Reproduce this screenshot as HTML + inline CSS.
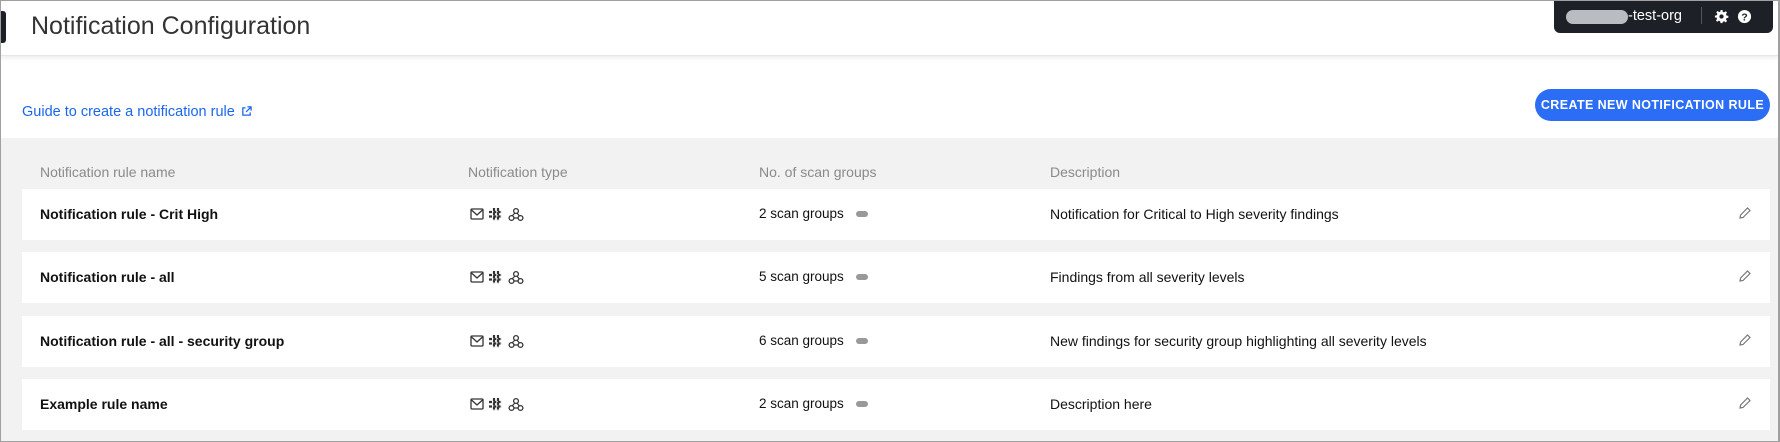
<!DOCTYPE html>
<html><head><style>
*{margin:0;padding:0;box-sizing:border-box}
body{width:1780px;height:442px;overflow:hidden;background:#fff;font-family:"Liberation Sans",sans-serif;position:relative}
.frame{position:absolute;inset:0;border:1px solid #a0a0a0;border-right:2px solid #a0a0a0}
.hdr{position:absolute;left:1px;top:1px;right:2px;height:55px;background:#fff;box-shadow:0 2px 4px rgba(0,0,0,.08);border-bottom:1px solid #e6e6e6}
.title{position:absolute;left:30px;top:11px;font-size:25px;color:#333}
.tab{position:absolute;left:0;top:10px;width:5px;height:32px;background:#1d2026;border-radius:0 3px 3px 0}
.top{position:absolute;left:1554px;top:0;width:219px;height:33px;background:#1d2026;border-radius:0 0 6px 6px}
.blur{position:absolute;left:12px;top:10px;width:62px;height:14px;border-radius:7px;background:#b9bcc0}
.org{position:absolute;left:74px;top:8px;color:#fff;font-size:14.5px}
.sep{position:absolute;left:147px;top:7px;width:1px;height:17px;background:#555}
.sg{position:absolute;width:15px;height:15px;top:9px}
.link{position:absolute;left:22px;top:104px;color:#1a66f0;font-size:14.5px}
.btn{position:absolute;left:1535px;top:89px;width:235px;height:32px;border-radius:16px;background:#2b6ef5;color:#fff;font-weight:bold;font-size:12.5px;text-align:center;line-height:32px;letter-spacing:.4px}
.gray{position:absolute;left:1px;top:138px;right:2px;bottom:0;background:#f2f2f2}
.ch{position:absolute;top:164px;color:#8a8a8a;font-size:14px}
.row{position:absolute;left:22px;width:1748px;height:51px;background:#fff}
.row span{position:absolute;top:17px;font-size:14px;color:#111}
.nm{left:18px;font-weight:bold}
.ic{position:absolute;left:448px;top:18px}
.row span.sc{left:737px;font-size:13.5px}
.pill{position:absolute;left:834px;top:22px;width:12px;height:6px;border-radius:3px;background:#999}
.ds{left:1028px}
.ed{position:absolute;left:1716px;top:17px}
</style></head><body>
<div class="hdr"><div class="tab"></div><div class="title">Notification Configuration</div></div>
<div class="top"><div class="blur"></div><div class="org">-test-org</div><div class="sep"></div>
<svg class="sg" style="left:160px" viewBox="0 0 16 16"><path fill="#fff" d="M7 1h2l.4 2 1.4.6 1.7-1.2 1.4 1.4-1.2 1.7.6 1.4 2 .4v2l-2 .4-.6 1.4 1.2 1.7-1.4 1.4-1.7-1.2-1.4.6L9 15H7l-.4-2-1.4-.6-1.7 1.2-1.4-1.4 1.2-1.7L2.7 9.1 1 9V7l2-.4.6-1.4-1.2-1.7 1.4-1.4 1.7 1.2 1.4-.6z"/><circle cx="8" cy="8" r="2.3" fill="#1d2026"/></svg>
<svg class="sg" style="left:183px" viewBox="0 0 16 16"><circle cx="8" cy="8" r="7" fill="#fff"/><text x="8" y="12" text-anchor="middle" font-size="11" font-weight="bold" fill="#1d2026" font-family="Liberation Sans">?</text></svg>
</div>
<div class="link">Guide to create a notification rule <svg width="11" height="11" viewBox="0 0 12 12" style="vertical-align:-1px;margin-left:2px"><path d="M5 2H2v8h8V7M7 1h4v4M11 1 5.5 6.5" stroke="#1a66f0" stroke-width="1.4" fill="none"/></svg></div>
<div class="btn">CREATE NEW NOTIFICATION RULE</div>
<div class="gray"></div>
<div class="ch" style="left:40px">Notification rule name</div>
<div class="ch" style="left:468px">Notification type</div>
<div class="ch" style="left:759px">No. of scan groups</div>
<div class="ch" style="left:1050px">Description</div>
<div class="row" style="top:189px"><span class="nm">Notification rule - Crit High</span><svg class="ic" width="60" height="15" viewBox="0 0 60 15"><rect x="1" y="2" width="12" height="10" rx="1" fill="none" stroke="#333" stroke-width="1.3"/><path d="M1.5 3l5.5 5 5.5-5" fill="none" stroke="#333" stroke-width="1.3"/><path d="M24 1v13M28 1v13M19 5h13M19 9.5h13" stroke="#333" stroke-width="2.2" stroke-dasharray="3 1.3"/><circle cx="46" cy="4" r="2.4" fill="none" stroke="#333" stroke-width="1.3"/><circle cx="41.5" cy="11" r="2.4" fill="none" stroke="#333" stroke-width="1.3"/><circle cx="50.5" cy="11" r="2.4" fill="none" stroke="#333" stroke-width="1.3"/><path d="M45 6l-3 3M47 6l2.5 3M44 11h4" stroke="#333" stroke-width="1.2"/></svg><span class="sc">2 scan groups</span><div class="pill"></div><span class="ds">Notification for Critical to High severity findings</span><svg class="ed" width="14" height="14" viewBox="0 0 14 14"><path d="M2 12l.6-3L9.5 2l2.5 2.5-7 7z" fill="none" stroke="#777" stroke-width="1.2"/></svg></div>
<div class="row" style="top:252px"><span class="nm">Notification rule - all</span><svg class="ic" width="60" height="15" viewBox="0 0 60 15"><rect x="1" y="2" width="12" height="10" rx="1" fill="none" stroke="#333" stroke-width="1.3"/><path d="M1.5 3l5.5 5 5.5-5" fill="none" stroke="#333" stroke-width="1.3"/><path d="M24 1v13M28 1v13M19 5h13M19 9.5h13" stroke="#333" stroke-width="2.2" stroke-dasharray="3 1.3"/><circle cx="46" cy="4" r="2.4" fill="none" stroke="#333" stroke-width="1.3"/><circle cx="41.5" cy="11" r="2.4" fill="none" stroke="#333" stroke-width="1.3"/><circle cx="50.5" cy="11" r="2.4" fill="none" stroke="#333" stroke-width="1.3"/><path d="M45 6l-3 3M47 6l2.5 3M44 11h4" stroke="#333" stroke-width="1.2"/></svg><span class="sc">5 scan groups</span><div class="pill"></div><span class="ds">Findings from all severity levels</span><svg class="ed" width="14" height="14" viewBox="0 0 14 14"><path d="M2 12l.6-3L9.5 2l2.5 2.5-7 7z" fill="none" stroke="#777" stroke-width="1.2"/></svg></div>
<div class="row" style="top:316px"><span class="nm">Notification rule - all - security group</span><svg class="ic" width="60" height="15" viewBox="0 0 60 15"><rect x="1" y="2" width="12" height="10" rx="1" fill="none" stroke="#333" stroke-width="1.3"/><path d="M1.5 3l5.5 5 5.5-5" fill="none" stroke="#333" stroke-width="1.3"/><path d="M24 1v13M28 1v13M19 5h13M19 9.5h13" stroke="#333" stroke-width="2.2" stroke-dasharray="3 1.3"/><circle cx="46" cy="4" r="2.4" fill="none" stroke="#333" stroke-width="1.3"/><circle cx="41.5" cy="11" r="2.4" fill="none" stroke="#333" stroke-width="1.3"/><circle cx="50.5" cy="11" r="2.4" fill="none" stroke="#333" stroke-width="1.3"/><path d="M45 6l-3 3M47 6l2.5 3M44 11h4" stroke="#333" stroke-width="1.2"/></svg><span class="sc">6 scan groups</span><div class="pill"></div><span class="ds">New findings for security group highlighting all severity levels</span><svg class="ed" width="14" height="14" viewBox="0 0 14 14"><path d="M2 12l.6-3L9.5 2l2.5 2.5-7 7z" fill="none" stroke="#777" stroke-width="1.2"/></svg></div>
<div class="row" style="top:379px"><span class="nm">Example rule name</span><svg class="ic" width="60" height="15" viewBox="0 0 60 15"><rect x="1" y="2" width="12" height="10" rx="1" fill="none" stroke="#333" stroke-width="1.3"/><path d="M1.5 3l5.5 5 5.5-5" fill="none" stroke="#333" stroke-width="1.3"/><path d="M24 1v13M28 1v13M19 5h13M19 9.5h13" stroke="#333" stroke-width="2.2" stroke-dasharray="3 1.3"/><circle cx="46" cy="4" r="2.4" fill="none" stroke="#333" stroke-width="1.3"/><circle cx="41.5" cy="11" r="2.4" fill="none" stroke="#333" stroke-width="1.3"/><circle cx="50.5" cy="11" r="2.4" fill="none" stroke="#333" stroke-width="1.3"/><path d="M45 6l-3 3M47 6l2.5 3M44 11h4" stroke="#333" stroke-width="1.2"/></svg><span class="sc">2 scan groups</span><div class="pill"></div><span class="ds">Description here</span><svg class="ed" width="14" height="14" viewBox="0 0 14 14"><path d="M2 12l.6-3L9.5 2l2.5 2.5-7 7z" fill="none" stroke="#777" stroke-width="1.2"/></svg></div>
<div class="frame"></div>
</body></html>
